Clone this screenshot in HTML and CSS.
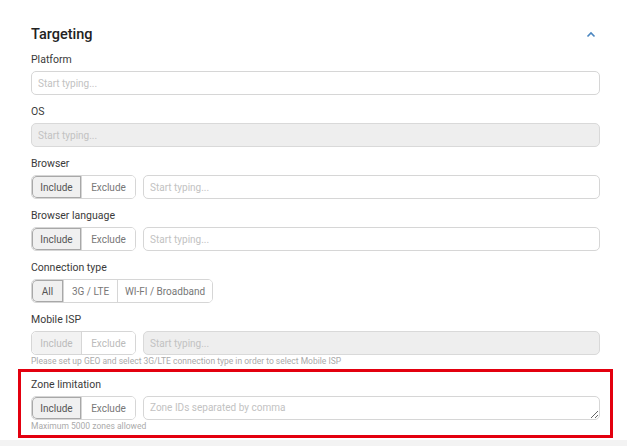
FILE: index.html
```html
<!DOCTYPE html>
<html lang="en">
<head>
    <meta charset="UTF-8">
    <title>Targeting</title>
    <link rel="stylesheet" href="styles.css">
</head>
<body>
    <div class="card">
        <div class="card-head">
            <h2>Targeting</h2>
            <svg class="chevron" width="10" height="7" viewBox="0 0 10 7"><path d="M1.5 5.5 L5 2 L8.5 5.5" fill="none" stroke="#4a86c0" stroke-width="1.6"/></svg>
        </div>

        <div class="field">
            <label>Platform</label>
            <input type="text" placeholder="Start typing...">
        </div>

        <div class="field">
            <label>OS</label>
            <input type="text" placeholder="Start typing..." disabled>
        </div>

        <div class="field">
            <label>Browser</label>
            <div class="row">
                <div class="seg">
                    <button class="active">Include</button>
                    <button>Exclude</button>
                </div>
                <input type="text" placeholder="Start typing...">
            </div>
        </div>

        <div class="field">
            <label>Browser language</label>
            <div class="row">
                <div class="seg">
                    <button class="active">Include</button>
                    <button>Exclude</button>
                </div>
                <input type="text" placeholder="Start typing...">
            </div>
        </div>

        <div class="field">
            <label>Connection type</label>
            <div class="row">
                <div class="seg conn">
                    <button class="active">All</button>
                    <button>3G / LTE</button>
                    <button>WI-FI / Broadband</button>
                </div>
            </div>
        </div>

        <div class="field tight">
            <label>Mobile ISP</label>
            <div class="row">
                <div class="seg disabled">
                    <button class="active" disabled>Include</button>
                    <button disabled>Exclude</button>
                </div>
                <input type="text" placeholder="Start typing..." disabled>
            </div>
            <div class="hint">Please set up GEO and select 3G/LTE connection type in order to select Mobile ISP</div>
        </div>

        <div class="field highlight">
            <label>Zone limitation</label>
            <div class="row">
                <div class="seg">
                    <button class="active">Include</button>
                    <button>Exclude</button>
                </div>
                <textarea placeholder="Zone IDs separated by comma"></textarea>
            </div>
            <div class="hint">Maximum 5000 zones allowed</div>
        </div>
    </div>
</body>
</html>
```

FILE: styles.css
```css
body {
    margin: 0;
    background: #f3f3f3;
    font-family: Roboto, "Liberation Sans", sans-serif;
    color: #333;
}

.card {
    background: white;
    padding: 24px 27px 2px 31px;
    box-shadow: 0 1px 4px rgba(0, 0, 0, 0.06);
}

.card-head {
    display: flex;
    justify-content: space-between;
    align-items: center;
    height: 20px;
    margin-bottom: 9px;
}

h2 {
    margin: 0;
    font-size: 14.5px;
    font-weight: 500;
    color: #222;
}

.chevron {
    margin-right: 4px;
}

.field {
    margin-bottom: 10px;
}

.field.tight {
    margin-bottom: 3px;
}

label {
    display: block;
    font-size: 10.5px;
    line-height: 14px;
    margin-bottom: 4px;
    color: #3a3a3a;
}

input[type="text"],
textarea {
    box-sizing: border-box;
    width: 100%;
    height: 24px;
    padding: 0 6px;
    border: 1px solid #d6d6d6;
    border-radius: 5px;
    font-family: inherit;
    font-size: 10px;
    background: white;
    outline: none;
}

textarea {
    padding: 5px 6px;
    resize: vertical;
    display: block;
}

input::placeholder,
textarea::placeholder {
    color: #c2c2c2;
}

input:disabled {
    background: #eeeeee;
    border-color: #d9d9d9;
}

.row {
    display: flex;
    gap: 7px;
}

.row input,
.row textarea {
    flex: 1;
}

.seg {
    display: flex;
    flex-shrink: 0;
    height: 24px;
    border: 1px solid #d6d6d6;
    border-radius: 5px;
    overflow: hidden;
    box-sizing: border-box;
}

.seg button {
    border: none;
    border-left: 1px solid #d6d6d6;
    background: white;
    font-family: inherit;
    font-size: 10px;
    color: #777;
    padding: 0;
    width: 54px;
}

.seg button:first-child {
    border-left: none;
    width: 49px;
}

.seg button.active {
    background: #f0f0f0;
    color: #555;
    box-shadow: inset 0 0 0 1px #a8a8a8;
    border-radius: 5px 0 0 5px;
}

.seg.conn button:first-child {
    width: 31px;
}

.seg.conn button:last-child {
    width: 95px;
}

.seg.disabled button {
    color: #bbb;
}

.seg.disabled button.active {
    box-shadow: none;
    background: #f2f2f2;
}

.hint {
    font-size: 8.5px;
    line-height: 10px;
    color: #aaa;
    margin-top: 1px;
}

.highlight {
    margin: 0 -13px 0 -13px;
    padding: 6px 10px 4px 10px;
    border: 3px solid #e3000f;
}
```
